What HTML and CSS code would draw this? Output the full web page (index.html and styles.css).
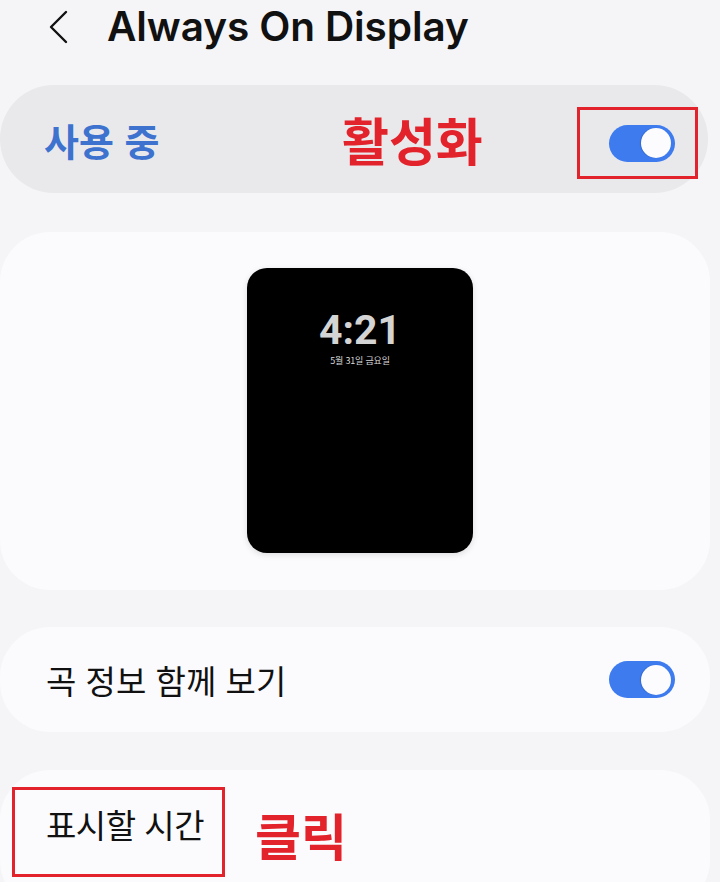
FILE: index.html
```html
<!DOCTYPE html>
<html lang="ko">
<head>
    <meta charset="UTF-8">
    <meta name="viewport" content="width=device-width, initial-scale=1.0">
    <title>Always On Display</title>
    <link rel="stylesheet" href="styles.css">
</head>
<body>
    <header class="top-bar">
        <svg class="back-icon" width="22" height="34" viewBox="0 0 22 34">
            <path d="M19 2 L4 17 L19 32" fill="none" stroke="#111" stroke-width="2.4" stroke-linecap="round" stroke-linejoin="round"/>
        </svg>
        <h1 class="title">Always On Display</h1>
    </header>

    <div class="master-row">
        <span class="master-label">사용 중</span>
        <span class="note note-on">활성화</span>
        <div class="mark mark-toggle">
            <span class="toggle"><span class="knob"></span></span>
        </div>
    </div>

    <div class="card preview-card">
        <div class="phone">
            <div class="clock">4:21</div>
            <div class="date">5월 31일 금요일</div>
        </div>
    </div>

    <div class="card row-card">
        <span class="row-label">곡 정보 함께 보기</span>
        <span class="toggle"><span class="knob"></span></span>
    </div>

    <div class="card last-card">
        <div class="mark mark-item">
            <span class="row-label">표시할 시간</span>
        </div>
        <span class="note note-click">클릭</span>
    </div>
</body>
</html>
```

FILE: styles.css
```css
body {
    margin: 0;
    background-color: #f5f5f7;
    font-family: "Noto Sans CJK KR", "Noto Sans", sans-serif;
    color: #111;
    width: 720px;
    height: 882px;
    overflow: hidden;
}
.top-bar {
    height: 85px;
    display: flex;
    align-items: flex-start;
    padding-left: 47px;
}
.back-icon {
    margin-top: 10px;
}
.title {
    margin: 0 0 0 38px;
    font-family: Inter, "Noto Sans", sans-serif;
    font-weight: 600;
    font-size: 40.5px;
    line-height: 54px;
    letter-spacing: -0.1px;
}
.master-row {
    width: 708px;
    height: 108px;
    box-sizing: border-box;
    background: #e9e9ec;
    border-radius: 54px;
    display: flex;
    align-items: center;
    padding-left: 44px;
}
.master-label {
    font-size: 38px;
    font-weight: 700;
    color: #3e72cf;
    width: 298px;
}
.note {
    color: #e3232b;
    font-weight: 700;
}
.note-on {
    font-size: 51px;
    width: 235px;
}
.mark {
    border: 3px solid #e3232b;
    box-sizing: border-box;
    display: flex;
    align-items: center;
}
.mark-toggle {
    width: 121px;
    height: 72px;
    justify-content: center;
    padding-left: 8px;
    margin-top: 8px;
}
.toggle {
    width: 66px;
    height: 37px;
    border-radius: 19px;
    background: #3d7bef;
    display: flex;
    align-items: center;
    justify-content: flex-end;
    padding-right: 4px;
    box-sizing: border-box;
}
.knob {
    width: 30px;
    height: 30px;
    border-radius: 50%;
    background: #fcfcfe;
    box-shadow: -1px 0 1px rgba(0, 0, 0, 0.15);
}
.card {
    width: 710px;
    background: #fbfbfd;
    border-radius: 50px;
    box-sizing: border-box;
}
.preview-card {
    margin-top: 39px;
    height: 358px;
    display: flex;
    justify-content: center;
    padding-top: 36px;
    padding-left: 10px;
}
.phone {
    width: 226px;
    height: 285px;
    background: #000;
    border-radius: 20px;
    box-shadow: 0 2px 6px rgba(0, 0, 0, 0.12);
    display: flex;
    flex-direction: column;
    align-items: center;
    padding-top: 40px;
    box-sizing: border-box;
}
.clock {
    font-family: Roboto, sans-serif;
    font-weight: 700;
    font-size: 41px;
    line-height: 44px;
    color: #d4d4d4;
}
.date {
    font-size: 9px;
    color: #d8d8d8;
    margin-top: 2px;
    letter-spacing: -0.2px;
}
.row-card {
    margin-top: 37px;
    height: 105px;
    display: flex;
    align-items: center;
    justify-content: space-between;
    padding: 0 35px 0 46px;
}
.row-label {
    font-size: 33px;
    font-weight: 400;
    color: #111;
}
.last-card {
    margin-top: 38px;
    height: 140px;
    display: flex;
    align-items: flex-start;
    padding: 17px 0 0 12px;
}
.mark-item {
    width: 213px;
    height: 90px;
    align-items: flex-start;
    padding: 10px 0 0 31px;
}
.mark-item .row-label {
    letter-spacing: -0.5px;
}
.note-click {
    font-size: 50px;
    margin: 17px 0 0 30px;
    line-height: 1.2;
}
```
